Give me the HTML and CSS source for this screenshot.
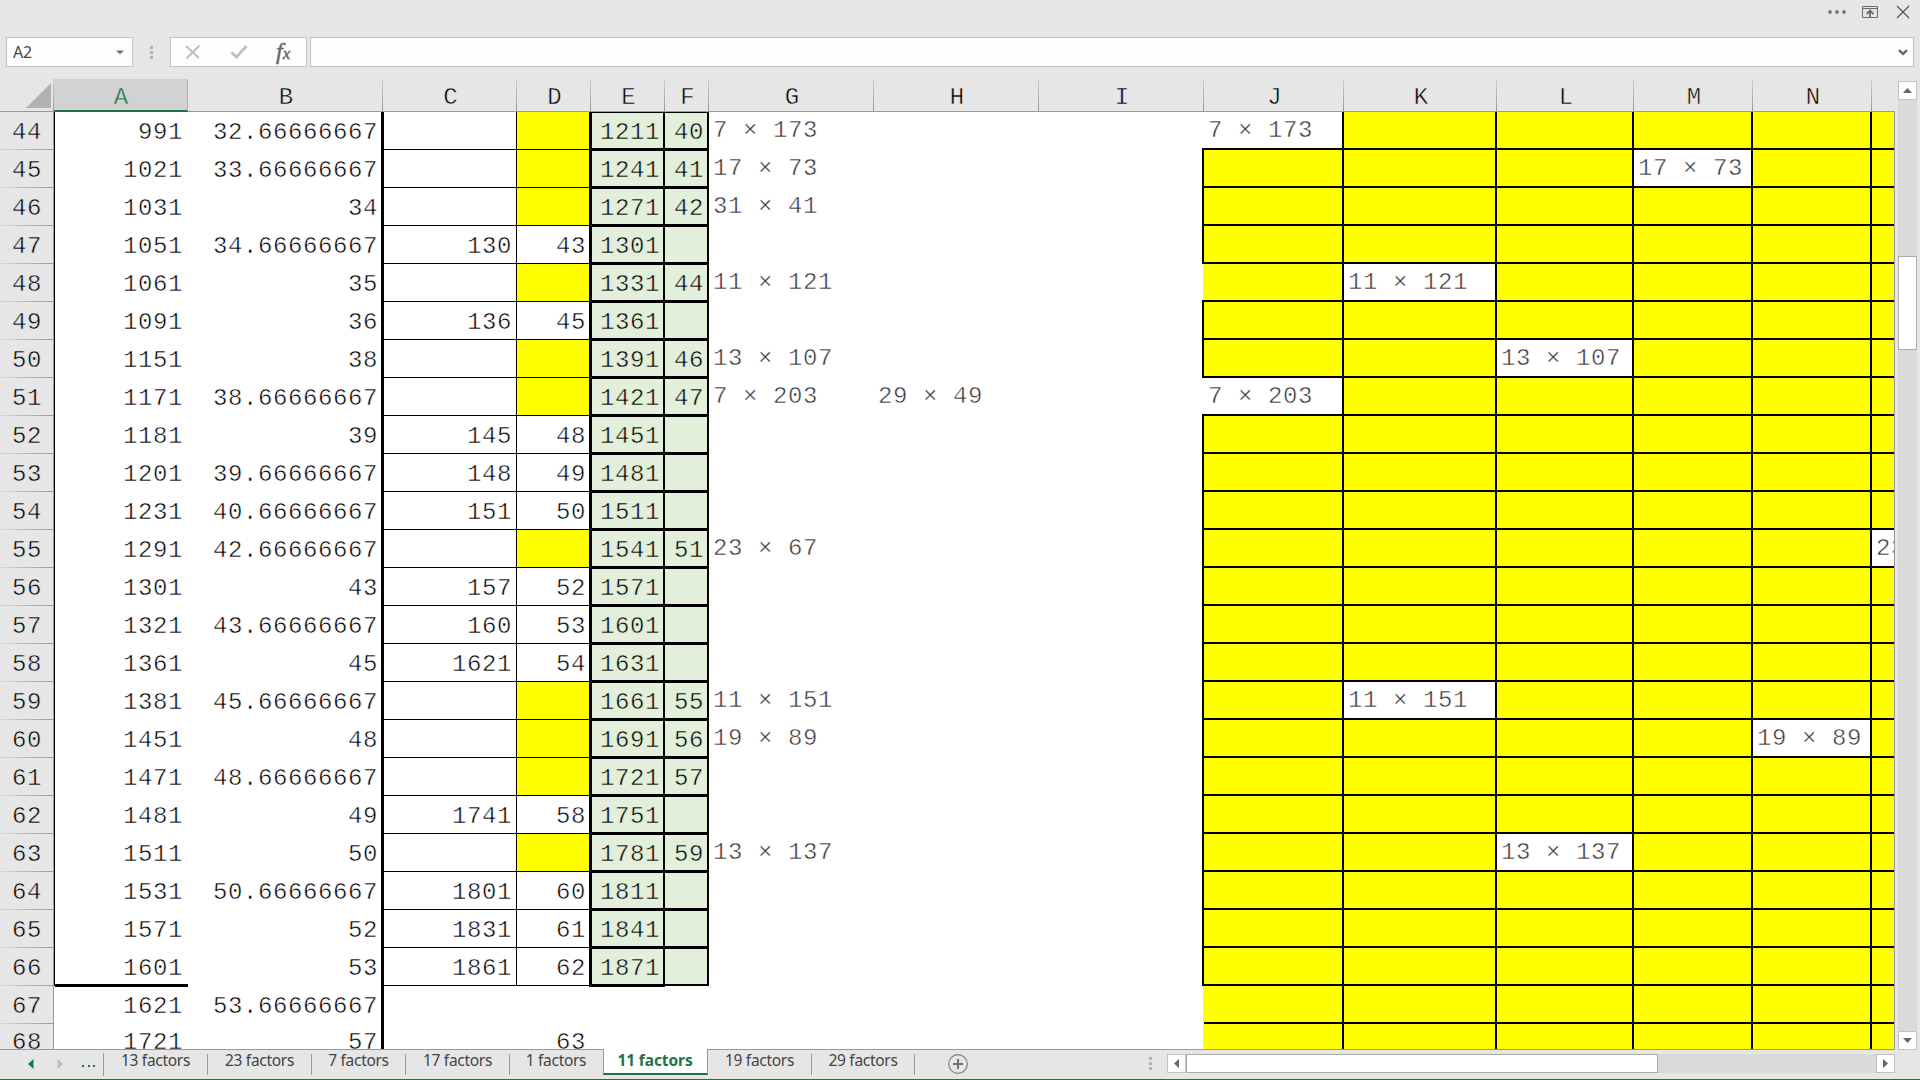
FILE: index.html
```html
<!DOCTYPE html>
<html lang="en">
<head>
<meta charset="utf-8">
<title>11 factors</title>
<link rel="stylesheet" href="styles.css">
</head>
<body>
<div class="app">
  <div class="titlebar">
    <svg width="20" height="20" viewBox="0 0 20 20"><g fill="#777"><circle cx="3" cy="12" r="1.9"/><circle cx="10" cy="12" r="1.9"/><circle cx="17" cy="12" r="1.9"/></g></svg>
    <svg width="16" height="20" viewBox="0 0 16 20"><g fill="none" stroke="#6a6a6a"><path d="M.5 6.5h15v11h-15zM1 8.5h14"/><path stroke-width="1.8" d="M8 17v-6M4.6 14l3.4-3.4 3.4 3.4"/></g></svg>
    <svg width="14" height="20" viewBox="0 0 14 20"><path fill="none" stroke="#555" stroke-width="1.2" d="M1 6l12 12M13 6L1 18"/></svg>
  </div>
  <div class="formula">
    <div class="box namebox"><span>A2</span><svg width="8" height="5" viewBox="0 0 8 5"><path fill="#777" d="M0 .5h8L4 4.5z"/></svg></div>
    <div class="dots"><i></i><i></i><i></i></div>
    <div class="box tools">
      <svg width="16" height="16" viewBox="0 0 16 16"><path fill="none" stroke="#bfbfbf" stroke-width="2" d="M1 2l13 12M14.500 1.500L1.500 14.500"/></svg>
      <svg width="18" height="16" viewBox="0 0 18 16"><path fill="none" stroke="#bfbfbf" stroke-width="2.800" d="M1.500 8.500l5 4.500L16.500 2"/></svg>
      <span class="fx">f<b>x</b></span>
    </div>
    <div class="box input"><svg width="10" height="7" viewBox="0 0 10 7"><path fill="none" stroke="#666" stroke-width="2.400" d="M1 1.200l4 3.600 4-3.600"/></svg></div>
  </div>
  <div class="main">
    <div class="sheet">
      <div class="row head" id="head"></div>
      <div class="body" id="body"></div>
    </div>
    <div class="vscroll">
      <div class="btn"><svg width="9" height="5" viewBox="0 0 9 5"><path fill="#666" d="M0 5h9L4.500 0z"/></svg></div>
      <div class="track"><div class="thumb"></div></div>
      <div class="btn"><svg width="9" height="5" viewBox="0 0 9 5"><path fill="#666" d="M0 0h9L4.500 5z"/></svg></div>
    </div>
  </div>
  <div class="bottom">
    <div class="nav">
      <svg width="6" height="10" viewBox="0 0 6 10"><path fill="#107c41" d="M5.500 0v10L0 5z"/></svg>
      <svg width="6" height="10" viewBox="0 0 6 10"><path fill="#bdbdbd" d="M.5 0v10L6 5z"/></svg>
      <div class="more"><i></i><i></i><i></i></div>
    </div>
    <div class="tabs">
      <div class="tab"><span>13 factors</span></div>
      <div class="tab"><span>23 factors</span></div>
      <div class="tab t94"><span>7 factors</span></div>
      <div class="tab"><span>17 factors</span></div>
      <div class="tab last"><span>1 factors</span></div>
      <div class="tab active"><span>11 factors</span></div>
      <div class="tab"><span>19 factors</span></div>
      <div class="tab t103"><span>29 factors</span></div>
    </div>
    <svg class="add" width="20" height="20" viewBox="0 0 20 20"><circle cx="10" cy="10" r="9.300" fill="none" stroke="#808080" stroke-width="1.200"/><path stroke="#707070" stroke-width="2" d="M10 5v10M5 10h10"/></svg>
    <div class="dots hdots"><i></i><i></i><i></i></div>
    <div class="hscroll">
      <div class="btn"><svg width="5" height="9" viewBox="0 0 5 9"><path fill="#666" d="M5 0v9L0 4.500z"/></svg></div>
      <div class="htrack"><div class="hthumb"></div></div>
      <div class="btn"><svg width="5" height="9" viewBox="0 0 5 9"><path fill="#666" d="M0 0v9l5-4.500z"/></svg></div>
    </div>
  </div>
</div>
<script src="sheet.js"></script>
</body>
</html>
```
FILE: styles.css
```css
* { box-sizing: border-box; }
body { margin: 0; background: #e6e6e6; overflow: hidden; }
svg { display: block; flex: none; }
.app { width: 1920px; height: 1080px; display: flex; flex-direction: column; border-bottom: 1px solid #217346; overflow: hidden; }

.titlebar { height: 37px; flex: none; display: flex; justify-content: flex-end; gap: 18px; padding-right: 10px; }
.titlebar svg:first-child { margin-right: -3px; }
.formula { height: 30px; flex: none; display: flex; padding-left: 6px; font-family: "Noto Sans", sans-serif; }
.box { background: #fdfdfd; border: 1px solid #c3c3c3; display: flex; align-items: center; }
.namebox { width: 127px; padding: 0 8px 0 6px; justify-content: space-between; font-size: 16px; color: #444; letter-spacing: -.2px; }
.dots { display: flex; flex-direction: column; justify-content: center; gap: 2px; }
.dots i { width: 3px; height: 3px; background: #b3b3b3; }
.formula .dots { width: 37px; padding-left: 17px; }
.tools { width: 137px; padding-left: 14px; gap: 29px; }
.tools .fx { font: italic 24px/28px "Liberation Serif", serif; color: #666; margin-left: -1px; white-space: nowrap; -webkit-text-stroke: .4px #666; }
.fx b { font-size: 17px; font-weight: normal; }
.input { margin-left: 3px; width: 1604px; justify-content: flex-end; padding-right: 5px; }

.main { margin-top: 12px; height: 971px; flex: none; display: flex; }
.sheet { width: 1895px; height: 971px; overflow: hidden; border-bottom: 1px solid #999; }
.row { display: grid; grid-template-columns: 54px 134px 195px 134px 74px 74px 44px 165px 165px 165px 140px 153px 137px 119px 119px 22px; }
.head { height: 33px; border-bottom: 1px solid #999; font: 24px/32px "Liberation Mono", monospace; text-align: center; -webkit-text-stroke: .5px #e6e6e6; }
.head div { background: linear-gradient(#cfcfcf, #999) right / 1px 100% no-repeat; padding: 3px 0 0 1px; height: 32px; line-height: 29px; padding-top: 4px; }
.head div.plain { background: none; }
.head .corner { display: flex; justify-content: flex-end; align-items: flex-end; padding: 0 3px 3px 0; }
.head .sel { background: #d2d2d2; color: #217346; border-right: 1px solid #b0b0b0; height: 33px; border-bottom: 2px solid #217346; -webkit-text-stroke-color: #d2d2d2; }
.body { background: #fff; border-right: 1px solid #999; height: 938px; overflow: hidden; font: 24px/28px "Liberation Mono", monospace; letter-spacing: .6px; -webkit-text-stroke: .5px #fff; }
.body .row { height: 38px; }
.body .row.short { height: 36px; }
.c { position: relative; display: flex; align-items: flex-end; justify-content: flex-end; padding: 0 5px 3px 0; white-space: pre; min-width: 0; }
.c.rh { background: linear-gradient(90deg, #d8d8d8, #999) bottom / 100% 1px no-repeat #e6e6e6; border-right: 1px solid #999; justify-content: center; padding: 0 0 3px 1px; -webkit-text-stroke-color: #e6e6e6; }
.a.framed { border-left: 1px solid #000; }
.a.end::after { content: ""; position: absolute; left: 0; right: 0; bottom: -1px; height: 3px; background: #000; z-index: 2; }
.b::after { content: ""; position: absolute; right: -1px; top: 0; bottom: 0; width: 3px; background: #000; z-index: 2; }
.lined { border-right: 1px solid #000; border-bottom: 1px solid #000; }
.cc.lined { padding-bottom: 2px; padding-right: 4px; }
.d.lined { border-right: 0; padding-bottom: 2px; }
.y { background: #ff0; }
.g { background: #e2efda; border-right: 2px solid #000; border-bottom: 2px solid #000; padding: 0 3px 1px 0; -webkit-text-stroke-color: #e2efda; }
.e::before { content: ""; position: absolute; z-index: 2; left: -2px; top: 0; bottom: -3px; width: 3px; background: #000; }
.e::after, .f::after { content: ""; position: absolute; z-index: 2; left: 0; right: -2px; bottom: -3px; height: 3px; background: #000; }
.f.end::after { display: none; }
.first .g { box-shadow: inset 0 1px #000; }
.t { justify-content: flex-start; color: #333; padding: 0 0 5px 4px; }
.j { border-right: 2px solid #000; border-bottom: 2px solid #000; padding-bottom: 3px; }
.jl::before { content: ""; position: absolute; left: -2px; top: -2px; bottom: -2px; width: 2px; background: #000; }
.o { border-right: 0; }
.open { box-shadow: -1px 0 #ff0; }

.vscroll { width: 19px; margin-left: 3px; margin-top: 2px; display: flex; flex-direction: column; }
.btn { width: 19px; height: 19px; flex: none; background: #fff; border: 1px solid #c3c3c3; display: flex; align-items: center; justify-content: center; }
.track { flex: 1; background: #dadada; padding-top: 156px; }
.thumb { height: 94px; background: #fff; border: 1px solid #ababab; }

.bottom { height: 29px; flex: none; display: flex; font: 15.500px/20px "Noto Sans", sans-serif; color: #444; }
.nav { width: 103px; display: flex; align-items: center; padding: 0 0 2px 28px; gap: 23px; }
.more { display: flex; gap: 3.500px; padding-top: 5px; margin-left: -4px; }
.more i { width: 2px; height: 2px; background: #217346; }
.tabs { display: flex; border-left: 1px solid #999; border-image: linear-gradient(transparent 12%, #999 12% 86%, transparent 86%) 1; }
.tab { width: 104px; text-align: center; background: linear-gradient(#999, #999) right 4px / 1px 21px no-repeat; white-space: nowrap; padding-right: 1px; letter-spacing: -.3px; }
.tab.t94 { width: 94px; }
.tab.t103 { width: 103px; }
.tab.last { width: 93px; background: none; }
.tab.active { background: #fff; height: 26px; margin-top: -1px; padding-top: 1px; border: solid #999; border-width: 0 1px; border-bottom: 2px solid #217346; color: #217346; font-weight: bold; width: 105px; letter-spacing: -.1px; }
.add { margin: 4px 0 0 33px; }
.hdots { width: 18px; margin: 0 0 2px 181px; }
.hscroll { display: flex; height: 19px; margin: 4px 0 0; width: 728px; }
.htrack { flex: 1; background: #dadada; }
.hthumb { width: 472px; height: 19px; background: #fff; border: 1px solid #ababab; }
```
FILE: sheet.js
```js
// Row number, A, B, C, D, E, F; an empty D is filled yellow.
const rows = `44|991|32.66666667|||1211|40
45|1021|33.66666667|||1241|41
46|1031|34|||1271|42
47|1051|34.66666667|130|43|1301|
48|1061|35|||1331|44
49|1091|36|136|45|1361|
50|1151|38|||1391|46
51|1171|38.66666667|||1421|47
52|1181|39|145|48|1451|
53|1201|39.66666667|148|49|1481|
54|1231|40.66666667|151|50|1511|
55|1291|42.66666667|||1541|51
56|1301|43|157|52|1571|
57|1321|43.66666667|160|53|1601|
58|1361|45|1621|54|1631|
59|1381|45.66666667|||1661|55
60|1451|48|||1691|56
61|1471|48.66666667|||1721|57
62|1481|49|1741|58|1751|
63|1511|50|||1781|59
64|1531|50.66666667|1801|60|1811|
65|1571|52|1831|61|1841|
66|1601|53|1861|62|1871|
67|1621|53.66666667||||
68|1721|57||63||`.split("\n").map(r => r.split("|"));

// Factor pairs by row: text in G, text in H, and the column that repeats G.
const factors = {
  44: ["7 × 173", "", "J"], 45: ["17 × 73", "", "M"], 46: ["31 × 41", "", ""],
  48: ["11 × 121", "", "K"], 50: ["13 × 107", "", "L"], 51: ["7 × 203", "29 × 49", "J"],
  55: ["23 × 67", "", "O"], 59: ["11 × 151", "", "K"], 60: ["19 × 89", "", "N"],
  63: ["13 × 137", "", "L"]
};

const cell = (cls, text = "") => `<div class="c ${cls}">${text}</div>`;

document.getElementById("head").innerHTML =
  '<div class="corner"><svg width="25" height="25" viewBox="0 0 25 25"><path fill="#b2b2b2" d="M25 0v25H0z"/></svg></div>' +
  [..."ABCDEFGHIJKLMN"].map(l => `<div class="${l === "A" ? "sel" : ""}">${l}</div>`).join("") +
  '<div class="plain"></div>';

document.getElementById("body").innerHTML = rows.map(([n, a, b, c, d, e, f]) => {
  n = +n;
  const framed = n <= 66, end = n === 66 ? " end" : "";
  const [g, h, col] = factors[n] || ["", "", ""];
  let html = cell("rh", n) + cell("a" + (framed ? " framed" : "") + end, a) + cell("b", b);
  html += cell("cc" + (framed ? " lined" : ""), c);
  html += cell("d" + (framed ? " lined" + (d ? "" : " y") : ""), d);
  html += framed ? cell("g e" + end, e) + cell("g f" + end, f) : cell("") + cell("");
  html += cell("t", g) + cell("t", h) + cell("t");
  for (const l of "JKLMNO") {
    const own = l === col;
    let cls = "t j" + (own ? "" : " y") + (l === "O" ? " o" : "");
    if (l === "J" && !own) cls += n === 48 || n > 66 ? " open" : " jl";
    html += cell(cls, own ? g : "");
  }
  return `<div class="row${n === 44 ? " first" : ""}${n === 68 ? " short" : ""}">${html}</div>`;
}).join("");
```
